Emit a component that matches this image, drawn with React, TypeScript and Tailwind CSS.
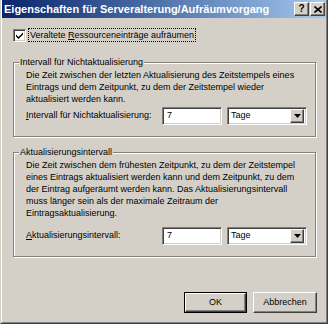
const font = "font-['Liberation_Sans',Arial,sans-serif]"

const sunken =
  'border border-t-[#808080] border-l-[#808080] border-b-white border-r-white shadow-[inset_1px_1px_0_#404040,inset_-1px_-1px_0_#d4d0c8] bg-white'
const raised =
  'border border-t-white border-l-white border-b-[#404040] border-r-[#404040] shadow-[inset_-1px_-1px_0_#808080] bg-[#d4d0c8]'

function Field({ value }: { value: string }) {
  return (
    <div className={`${sunken} w-[60px] h-[18px] flex items-center pl-[4px] text-black`}>{value}</div>
  )
}

function Select({ value }: { value: string }) {
  return (
    <div className={`${sunken} w-[80px] h-[18px] flex items-center justify-between pl-[3px] pr-[2px] text-black`}>
      <span>{value}</span>
      <div className={`${raised} w-[14px] h-[14px] flex items-center justify-center`}>
        <svg width="7" height="4" viewBox="0 0 7 4"><path d="M0 0h7L3.5 4z" fill="#000" /></svg>
      </div>
    </div>
  )
}

function Group({ title, children, className }: { title: string; children: React.ReactNode; className?: string }) {
  return (
    <div className={`relative border border-[#808080] shadow-[1px_1px_0_#fff,inset_1px_1px_0_#fff] w-[303px] ${className}`}>
      <span className="absolute -top-[7px] left-[5px] px-[1px] bg-[#d4d0c8] leading-[12px]">{title}</span>
      {children}
    </div>
  )
}

export default function App() {
  return (
    <div className={`${font} w-[329px] h-[326px] bg-white text-[9px] text-black`}>
      <div className="w-[328px] h-[324px] bg-[#d4d0c8] border-l border-l-[#d4d0c8] border-r border-b border-r-[#404040] border-b-[#404040]">
        <div className="h-full border-l border-l-white border-r border-b border-r-[#808080] border-b-[#808080] flex flex-col">
          <div className="h-[18px] bg-gradient-to-r from-[#0a246a] to-[#a6caf0] flex items-center justify-between pl-[2px] pr-[1px]">
            <span className="text-white font-bold text-[11px] leading-none">Eigenschaften für Serveralterung/Aufräumvorgang</span>
            <div className="flex gap-[1px]">
              <div className={`${raised} w-[15px] h-[14px] flex items-center justify-center text-[10px] font-bold leading-none`}>?</div>
              <div className={`${raised} w-[15px] h-[14px] flex items-center justify-center`}>
                <svg width="8" height="7" viewBox="0 0 8 7"><path d="M0.5 0.5l7 6M7.5 0.5l-7 6" stroke="#000" strokeWidth="1.6" /></svg>
              </div>
            </div>
          </div>

          <div className="pl-[11px] pr-[9px] flex flex-col">
            <div className="mt-[10px] flex items-center h-[14px]">
              <div className={`${sunken} w-[13px] h-[13px] flex items-center justify-center`}>
                <svg width="7" height="7" viewBox="0 0 7 7"><path d="M0 2.5l2.5 2.5L7 0.5v2L2.5 7 0 4.5z" fill="#000" /></svg>
              </div>
              <span className="ml-[2px] px-[1px] border border-dotted border-black leading-[12px]">
                Veraltete <span className="underline">R</span>essourceneinträge aufräumen
              </span>
            </div>

            <Group title="Intervall für Nichtaktualisierung" className="mt-[20px] pl-[12px] pt-[6px] pb-[11px]">
              <p className="leading-[12px] whitespace-nowrap">
                Die Zeit zwischen der letzten Aktualisierung des Zeitstempels eines<br />
                Eintrags und dem Zeitpunkt, zu dem der Zeitstempel wieder<br />
                aktualisiert werden kann.
              </p>
              <div className="mt-[2px] flex items-center">
                <span className="w-[136px]"><span className="underline">I</span>ntervall für Nichtaktualisierung:</span>
                <Field value="7" />
                <div className="ml-[5px]"><Select value="Tage" /></div>
              </div>
            </Group>

            <Group title="Aktualisierungsintervall" className="mt-[15px] pl-[12px] pt-[6px] pb-[11px]">
              <p className="leading-[12px] whitespace-nowrap">
                Die Zeit zwischen dem frühesten Zeitpunkt, zu dem der Zeitstempel<br />
                eines Eintrags aktualisiert werden kann und dem Zeitpunkt, zu dem<br />
                der Eintrag aufgeräumt werden kann. Das Aktualisierungsintervall<br />
                muss länger sein als der maximale Zeitraum der<br />
                Eintragsaktualisierung.
              </p>
              <div className="mt-[8px] flex items-center">
                <span className="w-[136px]"><span className="underline">A</span>ktualisierungsintervall:</span>
                <Field value="7" />
                <div className="ml-[5px]"><Select value="Tage" /></div>
              </div>
            </Group>

            <div className="mt-[35px] flex justify-end gap-[6px]">
              <div className="border border-black">
                <div className={`${raised} w-[61px] h-[19px] flex items-center justify-center`}>OK</div>
              </div>
              <div className={`${raised} w-[64px] h-[21px] flex items-center justify-center`}>Abbrechen</div>
            </div>
          </div>
        </div>
      </div>
    </div>
  )
}
